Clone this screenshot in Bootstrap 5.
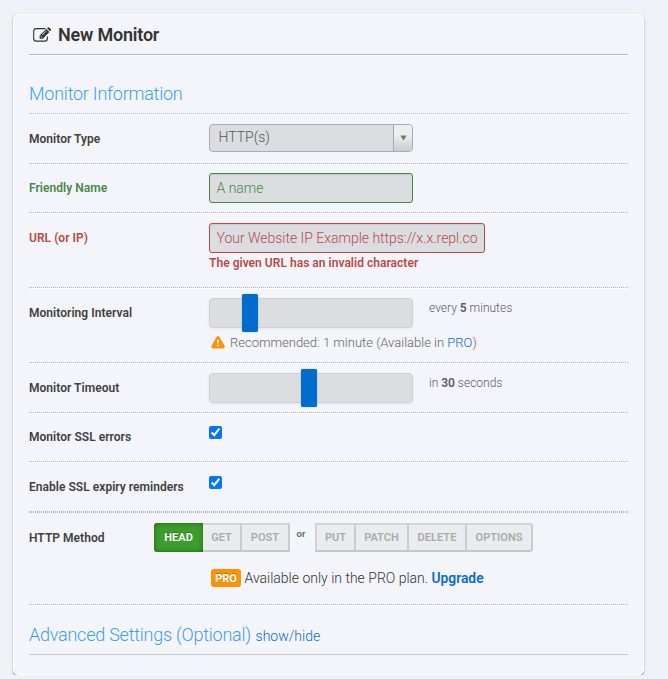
<!DOCTYPE html>
<html lang="en">
<head>
<meta charset="utf-8">
<meta name="viewport" content="width=device-width, initial-scale=1">
<title>New Monitor</title>
<link href="https://cdn.jsdelivr.net/npm/bootstrap@5.3.0/dist/css/bootstrap.min.css" rel="stylesheet">
<style>
body{background:#f0f1f6;font-family:Roboto,"Liberation Sans",sans-serif;font-weight:300;font-size:14px;line-height:20px;color:#333;overflow:hidden}
a{color:#0a6ccf;text-decoration:none}
.panel{width:631px;height:661px;margin:14px 0 0 13px;background:#f4f5fa;border:1px solid #fff;border-radius:5px;box-shadow:0 1px 2px rgba(0,0,0,.4);padding:0 15px}
.panel-head{height:40px;border-bottom:1px solid #b9b9b9;box-shadow:0 1px #fff}
.panel-head h1{font-size:18px;line-height:22px;font-weight:600;letter-spacing:-.2px;margin:0 0 0 6px;color:#333}
.section-title{font-size:18px;line-height:24px;font-weight:300;letter-spacing:-.24px;color:#3d9df6;margin:0}
.section-a{height:59px;padding-top:27px;border-bottom:1px dotted #b5b5bd;box-shadow:0 1px #fff}
.section-b{height:50px;padding-top:18px;border-bottom:1px solid #c6c7cb}
.toggle{font-size:14px;letter-spacing:0;margin-left:.5px}
.field{height:50px;border-bottom:1px dotted #b0b0b6;box-shadow:0 1px #fff}
.h49{height:49px}.h75{height:75px}
.flush{box-shadow:none}
.field>label{width:180px;flex:none;font-size:12px;line-height:18px;font-weight:600;letter-spacing:.04px;padding-top:16px;color:#404040}
.ok>label{color:#468847;padding-top:15px}.bad>label{color:#b94a48}
.field>.up{padding-top:15px}
.box{width:204px;height:30px;background:#dcdde0;border:1px solid #cfd0d3;border-radius:3px;font-size:14px;font-weight:300;line-height:28px;padding:0 6px 0 6.5px}
.box:focus{outline:0}
.pick{height:28px;border-color:#aaabbb;border-radius:4px;margin-top:10px;line-height:25px;padding:0 0 0 8.5px;color:#555;overflow:hidden}
.pick-arrow{width:19px;border-left:1px solid #aaa;background:linear-gradient(#eee 40%,#ccc)}
.ok .box{color:#468847;border-color:#468847;margin-top:9px;box-shadow:inset 0 1px 1px rgba(0,0,0,.08)}
.bad .box{width:276px;color:#b94a48;border-color:#b94a48;letter-spacing:-.02px;margin-top:10px;box-shadow:inset 0 1px 1px rgba(0,0,0,.08)}
.err{font-size:12px;line-height:18px;font-weight:600;letter-spacing:.03px;color:#b94a48;margin-top:1px}
.track{margin-top:10px;border-radius:4px;box-shadow:0 1px 3px rgba(0,0,0,.06)}
.knob{top:-5px;width:16px;height:38px;background:#006dcc;border-radius:2px;box-shadow:0 0 1px #006dcc}
.k1{left:32px}.k2{left:91px}
.amount{font-size:12px;line-height:18px;color:#5d5870;margin:11px 0 0 16px}
.amount b,.upgrade{font-weight:600}
.hint{font-size:13px;line-height:18px;color:#666;margin-top:6px}
.warn{margin:-2px 5px 0 2px}
.tick{width:13px;height:13px;margin-top:14px;display:block}
.up+.tick{margin-top:13px}
.method{height:93px;border-top:1px dotted #b0b0b6}
.method>label{width:125px}
.methods{margin-top:10px}
.m{height:29px;font-size:11px;line-height:25px;font-weight:600;letter-spacing:.04px;color:#aaabad;background:#ebecee;border:2px solid #d3d4d6;border-bottom-color:#c5c6c8;border-left-width:0;border-right:2px solid #cbccce;text-align:center;text-transform:uppercase}
.m.first{border-left-width:2px}
.m.last{border-radius:0 3px 3px 0}
.m.on{background:#3c9d2b;border:0;border-radius:3px 0 0 3px;color:#fff;line-height:29px;font-weight:700;text-shadow:0 -1px rgba(0,0,0,.25);box-shadow:inset 0 0 5px rgba(0,0,0,.4)}
.w-head{width:49px}.w-get{width:39px}.w-post{width:48px}.w-put{width:41px}.w-patch{width:53px}.w-del{width:58px}.w-opt{width:66px}
.or{width:25px;font-size:9.5px;line-height:22px;font-weight:600;color:#666;text-align:center;padding-right:3px}
.tag{background:#f89406;color:#fff;font-size:11px;font-weight:700;line-height:19px;height:18px;width:30px;border-radius:3px;text-align:center;text-shadow:0 -1px rgba(0,0,0,.25)}
.plan{margin:16px 0 0 57px;font-size:14px;line-height:20px}
.plan-text{margin-left:3.5px}
.upgrade{font-size:13.8px}
</style>
<script src="https://cdn.jsdelivr.net/npm/bootstrap@5.3.0/dist/js/bootstrap.bundle.min.js"></script>
</head>
<body>
<main class="panel">
  <header class="panel-head d-flex align-items-center">
    <svg width="19" height="16" viewBox="0 0 19 16" class="ms-1" fill="none" stroke="#333">
      <path d="M12.500 1.600H3.400Q.7 1.600 .7 4.200v7.200q0 2.700 2.700 2.700h8.400q2.600 0 2.600-2.700V9.600" stroke-width="1.100"/>
      <path d="M6.600 11.800V8.600l6.700-6.700 3.100 3.100-6.700 6.800z" fill="#333" stroke="none"/>
      <path d="M14 1.200l.600-.600q.800-.700 1.600 0l1.500 1.500q.700.800 0 1.600l-.600.600z" fill="#333" stroke="none"/>
      <path d="M7.600 9l1.700 1.700M9.200 8l3.800-3.800" stroke="#f4f5fa" stroke-width=".9"/>
    </svg>
    <h1 class="flex-grow-1">New Monitor</h1>
  </header>
  <div class="section-a"><h2 class="section-title">Monitor Information</h2></div>

  <div class="field d-flex">
    <label>Monitor Type</label>
    <div class="box pick d-flex justify-content-between">
      <span>HTTP(s)</span>
      <span class="pick-arrow d-flex align-items-center justify-content-center"><svg width="7" height="6" viewBox="0 0 7 6"><path d="M.3.500h6.400L3.500 5.500z" fill="#777"/></svg></span>
    </div>
  </div>
  <div class="field h49 ok d-flex">
    <label for="name">Friendly Name</label>
    <input id="name" class="box" type="text" value="A name">
  </div>
  <div class="field h75 bad d-flex">
    <label for="url">URL (or IP)</label>
    <div>
      <input id="url" class="box d-block" type="text" value="Your Website IP Example https://x.x.repl.co">
      <div class="err">The given URL has an invalid character</div>
    </div>
  </div>
  <div class="field h75 d-flex">
    <label>Monitoring Interval</label>
    <div>
      <div class="d-flex">
        <div class="box track position-relative"><div class="knob k1 position-absolute"></div></div>
        <div class="amount">every <b>5</b> minutes</div>
      </div>
      <div class="hint d-flex align-items-center">
        <svg width="14" height="13" viewBox="0 0 14 13" class="warn"><path d="M5.500 1Q7-.800 8.500 1l5 8.800q.900 2.700-1.500 2.700H2q-2.400 0-1.500-2.700z" fill="#f89406"/><path d="M6.100 3.800h1.800l-.3 4H6.400zM6.200 8.700h1.600v1.600H6.200z" fill="#fff"/></svg>
        <span class="hint-text">Recommended: 1 minute (Available in <a href="#">PRO</a>)</span>
      </div>
    </div>
  </div>
  <div class="field d-flex">
    <label>Monitor Timeout</label>
    <div class="box track position-relative"><div class="knob k2 position-absolute"></div></div>
    <div class="amount">in <b>30</b> seconds</div>
  </div>
  <div class="field h49 d-flex">
    <label for="ssl" class="up">Monitor SSL errors</label>
    <input id="ssl" class="tick" type="checkbox" checked>
  </div>
  <div class="field flush d-flex">
    <label for="exp">Enable SSL expiry reminders</label>
    <input id="exp" class="tick" type="checkbox" checked>
  </div>
  <div class="field method d-flex">
    <label>HTTP Method</label>
    <div>
      <div class="methods d-flex">
        <div class="m on w-head">Head</div><div class="m w-get">Get</div><div class="m w-post">Post</div>
        <div class="or">or</div>
        <div class="m first w-put">Put</div><div class="m w-patch">Patch</div><div class="m w-del">Delete</div><div class="m last w-opt">Options</div>
      </div>
      <div class="plan d-flex align-items-center"><span class="tag">PRO</span><span class="plan-text">Available only in the PRO plan. <a class="upgrade" href="#">Upgrade</a></span></div>
    </div>
  </div>
  <div class="section-b"><h2 class="section-title">Advanced Settings (Optional) <a class="toggle" href="#">show/hide</a></h2></div>
</main>
</body>
</html>
